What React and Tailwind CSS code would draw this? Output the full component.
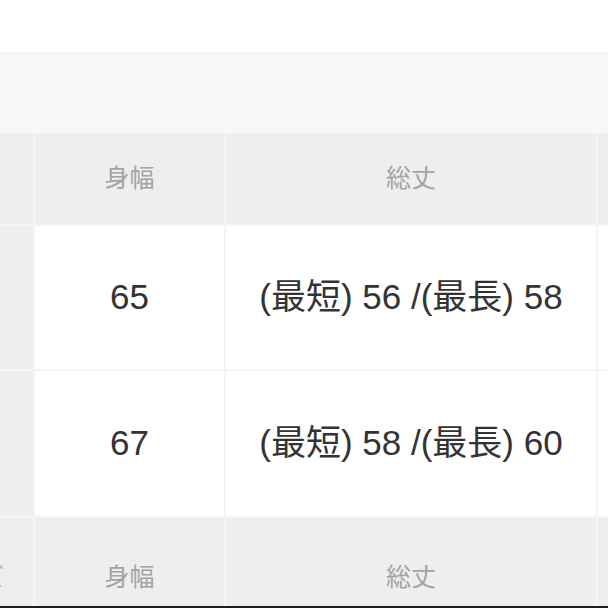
const font = { fontFamily: '"Liberation Sans", "Noto Sans CJK JP", sans-serif' };

const rows = [
  { width: '65', length: '(最短) 56 /(最長) 58', h: 'h-[143px]' },
  { width: '67', length: '(最短) 58 /(最長) 60', h: 'h-[145px]' },
];

function HeaderRow({ h, label }) {
  return (
    <>
      <div className={`${h} bg-[#eeeeee] flex items-center justify-end pr-[29px] text-[24px] text-[#a3a3a3] whitespace-nowrap`}>{label}</div>
      <div className={`${h} bg-[#eeeeee] flex items-center justify-center text-[25px] text-[#a3a3a3]`}>身幅</div>
      <div className={`${h} bg-[#eeeeee] flex items-center justify-center text-[25px] text-[#a3a3a3]`}>総丈</div>
      <div className={`${h} bg-[#eeeeee]`} />
    </>
  );
}

export default function App() {
  return (
    <div className="w-[608px] h-[608px] bg-white overflow-hidden flex flex-col" style={font}>
      <div className="h-[52px] shrink-0 bg-white" />
      <div className="h-[81px] shrink-0 bg-[#f7f7f7]" />

      {/* table, scrolled a little to the right */}
      <div className="h-[473px] shrink-0 overflow-hidden">
        <div className="ml-[-87px] grid grid-cols-[120px_189px_370px_140px] gap-[2px] bg-[#f4f4f4]">
          <HeaderRow h="h-[91px]" label="" />
          {rows.map((r) => (
            <div key={r.width} className="contents">
              <div className={`${r.h} bg-[#eeeeee]`} />
              <div className={`${r.h} bg-white flex items-center justify-center text-[35px] text-[#333333]`}>{r.width}</div>
              <div className={`${r.h} bg-white flex items-center justify-center text-[35px] text-[#333333] whitespace-nowrap`}>{r.length}</div>
              <div className={`${r.h} bg-white`} />
            </div>
          ))}
          <HeaderRow h="h-[120px]" label="サイズ" />
        </div>
      </div>

      <div className="h-[2px] shrink-0 bg-[#1e1e1e]" />
    </div>
  );
}
